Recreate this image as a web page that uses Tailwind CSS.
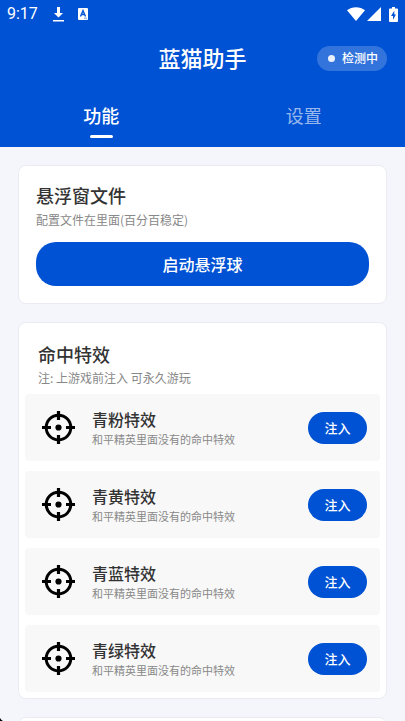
<!DOCTYPE html>
<html lang="zh-CN">
<head>
<meta charset="utf-8">
<meta name="viewport" content="width=device-width, initial-scale=1">
<title>蓝猫助手</title>
<script src="https://cdn.jsdelivr.net/npm/@tailwindcss/browser@4"></script>
</head>
<body class="h-screen overflow-hidden bg-[#f5f6fb] font-['Noto_Sans_CJK_SC',sans-serif] text-[#333333]">
<svg class="hidden" aria-hidden="true">
  <symbol id="target" viewBox="0 0 33 33">
    <g fill="none" stroke="currentColor" stroke-width="3.2">
      <circle cx="16.5" cy="16.5" r="12.3" stroke-width="3"/>
      <path d="M16.5 0v9M16.5 24v9M0 16.5h9M24 16.5h9"/>
    </g>
    <circle cx="16.5" cy="16.5" r="3.1" fill="currentColor"/>
  </symbol>
</svg>

<header class="bg-[#0052d4] text-white">
  <!-- Status bar -->
  <div class="flex h-7 items-center justify-between px-[7px]">
    <div class="flex items-center">
      <span class="w-[45px] font-[Roboto,sans-serif] text-base leading-7">9:17</span>
      <svg class="h-[15px] w-[13px]" viewBox="0 0 13 15" fill="currentColor"><path d="M5 0h3v6h3L6.500 10.500 2 6h3zM1 13h11v1.500H1z"/></svg>
      <svg class="ml-3 h-3 w-3" viewBox="0 0 12 12"><rect x="1" y="0" width="10" height="12" rx="1" fill="#fff"/><path d="M3.500 8.500L6 2.500l2.500 6M4.500 6.500h3" fill="none" stroke="#0052d4" stroke-width="1.400"/><path d="M7 10.200h3" stroke="#0052d4" stroke-width=".6"/></svg>
    </div>
    <div class="flex items-center">
      <svg class="h-[14px] w-[18px]" viewBox="0 0 18 14" fill="currentColor"><path d="M9 14L0 3.200C5-.9 13-.9 18 3.200z"/></svg>
      <svg class="ml-[2px] h-[14px] w-[14px]" viewBox="0 0 14 14" fill="currentColor"><path d="M14 0v14H0z"/></svg>
      <svg class="ml-[8px] h-[15px] w-[9px]" viewBox="0 0 9 15"><path d="M3 0h3v1.500h2q1 0 1 1V14q0 1-1 1H1q-1 0-1-1V2.500q0-1 1-1h2z" fill="#fff"/><path d="M5.300 3.700L2 9h2v3.800L7 7.500H5.300z" fill="#0052d4"/></svg>
    </div>
  </div>

  <!-- Title bar -->
  <div class="grid h-[60px] grid-cols-[1fr_auto_1fr] items-center px-[18px]">
    <h1 class="col-start-2 pb-[2px] text-[22px] font-medium leading-8">蓝猫助手</h1>
    <div class="flex h-[25px] items-center gap-[7px] justify-self-end rounded-full bg-white/20 pl-[11px] pr-[9px] text-xs font-medium">
      <span class="size-[7px] rounded-full bg-white/90"></span>检测中
    </div>
  </div>

  <!-- Tabs -->
  <nav class="grid h-[59px] grid-cols-2 text-lg">
    <button type="button" class="flex flex-col items-center pt-[13px] font-medium"><span class="leading-7">功能</span><span class="mt-[6px] h-[3px] w-[23px] rounded-full bg-white"></span></button>
    <button type="button" class="flex flex-col items-center pt-[13px] text-white/60"><span class="leading-7">设置</span></button>
  </nav>
</header>

<main class="flex flex-col gap-[18px] px-[18px] pt-[18px]">
  <section class="rounded-lg border border-[#ebecf1] bg-white px-[17px] pb-[17px] pt-[15px]">
    <h2 class="text-lg font-medium leading-7">悬浮窗文件</h2>
    <p class="pt-px text-xs leading-5 text-[#888888]">配置文件在里面(百分百稳定)</p>
    <button type="button" class="mt-3 h-11 w-full rounded-[20px] bg-[#0052d4] text-base font-medium text-white">启动悬浮球</button>
  </section>

  <section class="rounded-lg border border-[#ebecf1] bg-white px-[6px] pb-[6px] pt-[17px]">
    <h2 class="px-[13px] text-lg font-medium leading-7">命中特效</h2>
    <p class="px-[13px] text-xs leading-5 text-[#888888]">注: 上游戏前注入 可永久游玩</p>
    <ul class="mt-[6px] flex flex-col gap-[10px]">
      <li class="flex h-[67px] items-center rounded bg-[#f8f8f8] pl-[17px] pr-[13px]">
        <svg class="size-[33px] text-black"><use href="#target"/></svg>
        <div class="ml-[17px] flex-1 pb-px"><h3 class="text-base font-medium leading-6">青粉特效</h3><p class="text-[11px] leading-4 text-[#888888]">和平精英里面没有的命中特效</p></div>
        <button type="button" class="h-8 w-[59px] rounded-full bg-[#0052d4] text-[13px] font-medium text-white">注入</button>
      </li>
      <li class="flex h-[67px] items-center rounded bg-[#f8f8f8] pl-[17px] pr-[13px]">
        <svg class="size-[33px] text-black"><use href="#target"/></svg>
        <div class="ml-[17px] flex-1 pb-px"><h3 class="text-base font-medium leading-6">青黄特效</h3><p class="text-[11px] leading-4 text-[#888888]">和平精英里面没有的命中特效</p></div>
        <button type="button" class="h-8 w-[59px] rounded-full bg-[#0052d4] text-[13px] font-medium text-white">注入</button>
      </li>
      <li class="flex h-[67px] items-center rounded bg-[#f8f8f8] pl-[17px] pr-[13px]">
        <svg class="size-[33px] text-black"><use href="#target"/></svg>
        <div class="ml-[17px] flex-1 pb-px"><h3 class="text-base font-medium leading-6">青蓝特效</h3><p class="text-[11px] leading-4 text-[#888888]">和平精英里面没有的命中特效</p></div>
        <button type="button" class="h-8 w-[59px] rounded-full bg-[#0052d4] text-[13px] font-medium text-white">注入</button>
      </li>
      <li class="flex h-[67px] items-center rounded bg-[#f8f8f8] pl-[17px] pr-[13px]">
        <svg class="size-[33px] text-black"><use href="#target"/></svg>
        <div class="ml-[17px] flex-1 pb-px"><h3 class="text-base font-medium leading-6">青绿特效</h3><p class="text-[11px] leading-4 text-[#888888]">和平精英里面没有的命中特效</p></div>
        <button type="button" class="h-8 w-[59px] rounded-full bg-[#0052d4] text-[13px] font-medium text-white">注入</button>
      </li>
    </ul>
  </section>

  <section class="h-20 rounded-lg border border-[#ebecf1] bg-white"></section>
</main>

<!-- Rounded screen corner -->
<svg class="fixed bottom-0 left-0 size-1" viewBox="0 0 4 4"><path d="M0 1Q1 3 3 4H0z" fill="#000"/></svg>
</body>
</html>
